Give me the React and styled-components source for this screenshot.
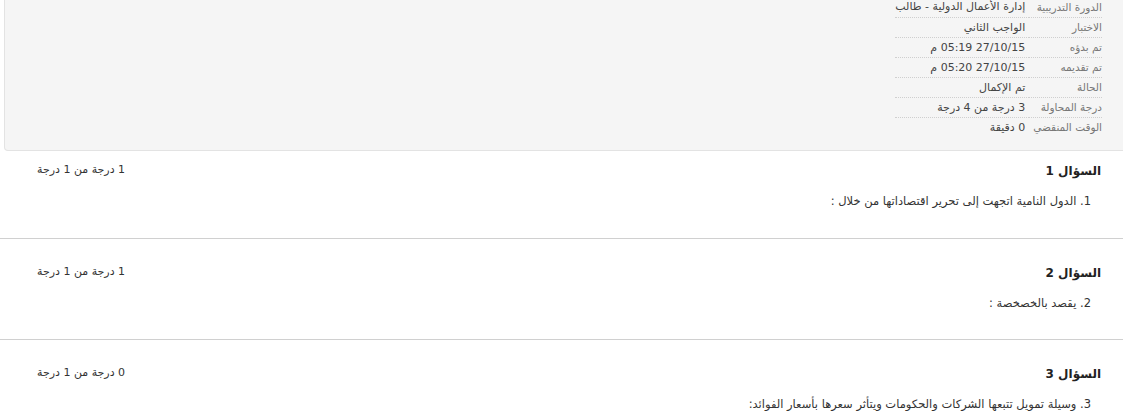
import React from "react";
import styled, { createGlobalStyle } from "styled-components";

const GlobalStyle = createGlobalStyle`
  html, body {
    margin: 0;
    padding: 0;
    background: #fff;
    overflow: hidden;
  }
  body {
    font-family: Tahoma, "DejaVu Sans", "Liberation Sans", sans-serif;
    color: #333;
  }
`;

const summary = [
  ["الدورة التدريبية", "إدارة الأعمال الدولية - طالب"],
  ["الاختبار", "الواجب الثاني"],
  ["تم بدؤه", "27/10/15 05:19 م"],
  ["تم تقديمه", "27/10/15 05:20 م"],
  ["الحالة", "تم الإكمال"],
  ["درجة المحاولة", "3 درجة من 4 درجة"],
  ["الوقت المنقضي", "0 دقيقة"],
];

const questions = [
  { title: "السؤال 1", text: "1. الدول النامية اتجهت إلى تحرير اقتصاداتها من خلال :", grade: "1 درجة من 1 درجة" },
  { title: "السؤال 2", text: "2. يقصد بالخصخصة :", grade: "1 درجة من 1 درجة" },
  { title: "السؤال 3", text: "3. وسيلة تمويل تتبعها الشركات والحكومات ويتأثر سعرها بأسعار الفوائد:", grade: "0 درجة من 1 درجة" },
];

const Page = styled.div`
  direction: rtl;
  width: 1123px;
`;

const Panel = styled.div`
  background: #f5f5f5;
  border: 1px solid #e3e3e3;
  border-top: none;
  border-radius: 0 0 4px 4px;
  margin: 0 -10px 0 0;
  margin-left: 4px;
  padding: 0 30px 13px 0;
`;

const Summary = styled.table`
  border-collapse: collapse;
  margin-top: -3px;
  font-size: 11px;
`;

const Row = styled.tr`
  height: 20px;
  border-bottom: 1px dotted #cfcfcf;
  &:last-child {
    border-bottom: none;
  }
`;

const Label = styled.th`
  font-weight: normal;
  font-size: 10.5px;
  text-align: right;
  color: #777;
  padding: 0 0 0 4px;
  white-space: nowrap;
`;

const Value = styled.td`
  text-align: right;
  color: #444;
  padding: 0 4px 0 0;
  white-space: nowrap;
`;

const QuestionList = styled.div``;

const Question = styled.div`
  display: flex;
  justify-content: space-between;
  align-items: flex-start;
  padding: 26px 22px 28px 37px;
  border-bottom: 1px solid #d0d0d0;
  &:first-child {
    padding-top: 12px;
    padding-bottom: 29px;
  }
`;

const Body = styled.div`
  display: flex;
  flex-direction: column;
  gap: 14px;
`;

const Title = styled.h3`
  margin: 0;
  font-size: 12px;
  line-height: 16px;
  font-weight: bold;
  color: #222;
`;

const Text = styled.p`
  margin: 0;
  padding-right: 10px;
  font-size: 11.5px;
  line-height: 16px;
  color: #333;
`;

const Grade = styled.div`
  font-size: 11px;
  line-height: 14px;
  color: #333;
`;

export default function App() {
  return (
    <Page>
      <GlobalStyle />
      <Panel>
        <Summary>
          <tbody>
            {summary.map(([label, value]) => (
              <Row key={label}>
                <Label>{label}</Label>
                <Value>{value}</Value>
              </Row>
            ))}
          </tbody>
        </Summary>
      </Panel>
      <QuestionList>
        {questions.map((q) => (
          <Question key={q.title}>
            <Body>
              <Title>{q.title}</Title>
              <Text>{q.text}</Text>
            </Body>
            <Grade>{q.grade}</Grade>
          </Question>
        ))}
      </QuestionList>
    </Page>
  );
}
